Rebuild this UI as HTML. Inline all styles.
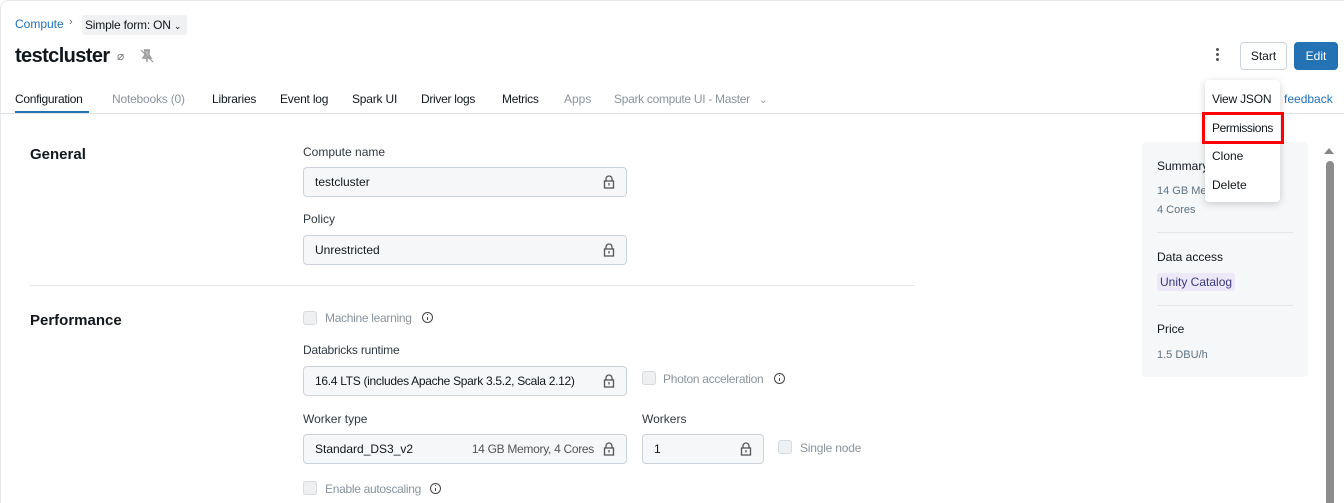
<!DOCTYPE html>
<html><head><meta charset="utf-8"><style>
*{box-sizing:border-box;margin:0;padding:0}
html,body{width:1344px;height:503px;overflow:hidden}
body{background:#fff;font-family:"Liberation Sans",sans-serif;color:#11171c;position:relative;font-size:12px}
.a{position:absolute;white-space:nowrap}
.frame{position:absolute;left:0;top:0;width:1400px;height:503px;border:1px solid #e8ebee;border-bottom:none;border-radius:8px 8px 0 0}
.tab{position:absolute;top:92px;font-size:12px;color:#11171c}
.tab.d{color:#8a949e}
.lbl{position:absolute;font-size:12px;color:#2f3941}
.inp{position:absolute;height:30px;background:#f6f7f9;border:1px solid #cbd2d9;border-radius:4px;font-size:12px;line-height:28px;padding-left:11px;color:#11171c}
.lock{position:absolute;right:11px;top:7px}
.cb{position:absolute;width:14px;height:14px;border:1px solid #d5dbe0;background:#eef0f2;border-radius:3px}
.gl{color:#8a949e;font-size:12px}
.info{display:inline-block;width:11px;height:11px;border:1.2px solid #444;border-radius:50%;position:absolute}
.info:after{content:"";position:absolute;left:3.6px;top:3.5px;width:1.2px;height:3px;background:#444}
.info:before{content:"";position:absolute;left:3.6px;top:1.3px;width:1.2px;height:1.2px;background:#444}
.h{position:absolute;font-size:15px;font-weight:bold;color:#11171c}
</style></head><body>
<div class="frame"></div>
<div class="a" style="left:15px;top:17px;font-size:12px;color:#2272b4">Compute</div>
<div class="a" style="left:69px;top:16px;font-size:11px;color:#666">›</div>
<div class="a" style="left:82px;top:15px;height:20px;width:105px;background:#f0f1f3;border-radius:3px;padding:3px 3px;font-size:12px;letter-spacing:-0.2px">Simple form: ON <span style="font-size:9px">⌄</span></div>
<div class="a" style="left:15px;top:45px;font-size:20px;font-weight:bold;letter-spacing:-0.6px">testcluster</div>
<div class="a" style="left:117px;top:49px;font-size:12px;color:#777">⌀</div>
<svg class="a" style="left:140px;top:49px" width="14" height="14" viewBox="0 0 14 14"><path d="M4 1h6M5 1v5l-2 3h8l-2-3V1M7 9v4" stroke="#999" stroke-width="1.4" fill="#bbb"/><path d="M1 1l12 12" stroke="#999" stroke-width="1.2"/></svg>
<div class="tab" style="left:15px;letter-spacing:-0.3px">Configuration</div>
<div class="a" style="left:15px;top:111px;width:74px;height:3px;background:#2272b4"></div>
<div class="tab d" style="left:112px;letter-spacing:-0.2px">Notebooks (0)</div>
<div class="tab" style="left:212px;letter-spacing:-0.2px">Libraries</div>
<div class="tab" style="left:280px;letter-spacing:-0.2px">Event log</div>
<div class="tab" style="left:352px;letter-spacing:-0.2px">Spark UI</div>
<div class="tab" style="left:421px;letter-spacing:-0.3px">Driver logs</div>
<div class="tab" style="left:502px;letter-spacing:-0.3px">Metrics</div>
<div class="tab d" style="left:564px">Apps</div>
<div class="tab d" style="left:614px;letter-spacing:-0.3px">Spark compute UI - Master &nbsp; <span style="font-size:10px">⌄</span></div>
<div class="tab" style="left:1274px;color:#2272b4">d feedback</div>
<div class="a" style="left:0;top:113px;width:1344px;height:1px;background:#dfe3e7"></div>
<div class="a" style="left:1216px;top:48px;width:3px;height:3px;background:#555;border-radius:50%;box-shadow:0 5px 0 #555,0 10px 0 #555"></div>
<div class="a" style="left:1240px;top:42px;width:47px;height:28px;border:1px solid #cbd2d9;border-radius:4px;text-align:center;line-height:26px;font-size:12px">Start</div>
<div class="a" style="left:1294px;top:42px;width:44px;height:28px;background:#2272b4;border-radius:4px;text-align:center;line-height:28px;font-size:12px;color:#fff">Edit</div>
<div class="h" style="left:30px;top:146px">General</div>
<div class="lbl" style="left:303px;top:145px">Compute name</div>
<div class="inp" style="left:303px;top:167px;width:324px">testcluster<svg class="lock" width="12" height="14" viewBox="0 0 12 14"><path d="M3 6V4a3 3 0 0 1 6 0v2" fill="none" stroke="#555" stroke-width="1.3"/><rect x="1.5" y="6" width="9" height="7" fill="none" stroke="#555" stroke-width="1.3"/><path d="M6 8v2.5" stroke="#555" stroke-width="1.3"/></svg></div>
<div class="lbl" style="left:303px;top:212px">Policy</div>
<div class="inp" style="left:303px;top:235px;width:324px">Unrestricted<svg class="lock" width="12" height="14" viewBox="0 0 12 14"><path d="M3 6V4a3 3 0 0 1 6 0v2" fill="none" stroke="#555" stroke-width="1.3"/><rect x="1.5" y="6" width="9" height="7" fill="none" stroke="#555" stroke-width="1.3"/><path d="M6 8v2.5" stroke="#555" stroke-width="1.3"/></svg></div>
<div class="a" style="left:30px;top:285px;width:885px;height:1px;background:#e4e7ea"></div>
<div class="h" style="left:30px;top:312px">Performance</div>
<div class="cb" style="left:303px;top:311px"></div>
<div class="a gl" style="left:325px;top:311px;letter-spacing:-0.3px">Machine learning</div>
<div class="info" style="left:422px;top:312px"></div>
<div class="lbl" style="left:303px;top:343px;letter-spacing:-0.2px">Databricks runtime</div>
<div class="inp" style="left:303px;top:366px;width:324px;letter-spacing:-0.3px">16.4 LTS (includes Apache Spark 3.5.2, Scala 2.12)<svg class="lock" width="12" height="14" viewBox="0 0 12 14"><path d="M3 6V4a3 3 0 0 1 6 0v2" fill="none" stroke="#555" stroke-width="1.3"/><rect x="1.5" y="6" width="9" height="7" fill="none" stroke="#555" stroke-width="1.3"/><path d="M6 8v2.5" stroke="#555" stroke-width="1.3"/></svg></div>
<div class="cb" style="left:642px;top:371px"></div>
<div class="a gl" style="left:663px;top:372px;letter-spacing:-0.3px">Photon acceleration</div>
<div class="info" style="left:774px;top:373px"></div>
<div class="lbl" style="left:303px;top:412px">Worker type</div>
<div class="inp" style="left:303px;top:434px;width:324px">Standard_DS3_v2<span style="position:absolute;right:32px;color:#555;letter-spacing:-0.3px">14 GB Memory, 4 Cores</span><svg class="lock" width="12" height="14" viewBox="0 0 12 14"><path d="M3 6V4a3 3 0 0 1 6 0v2" fill="none" stroke="#555" stroke-width="1.3"/><rect x="1.5" y="6" width="9" height="7" fill="none" stroke="#555" stroke-width="1.3"/><path d="M6 8v2.5" stroke="#555" stroke-width="1.3"/></svg></div>
<div class="lbl" style="left:642px;top:412px">Workers</div>
<div class="inp" style="left:642px;top:434px;width:122px">1<svg class="lock" width="12" height="14" viewBox="0 0 12 14"><path d="M3 6V4a3 3 0 0 1 6 0v2" fill="none" stroke="#555" stroke-width="1.3"/><rect x="1.5" y="6" width="9" height="7" fill="none" stroke="#555" stroke-width="1.3"/><path d="M6 8v2.5" stroke="#555" stroke-width="1.3"/></svg></div>
<div class="cb" style="left:778px;top:440px"></div>
<div class="a gl" style="left:800px;top:441px;letter-spacing:-0.2px">Single node</div>
<div class="cb" style="left:303px;top:481px"></div>
<div class="a gl" style="left:325px;top:482px;letter-spacing:-0.3px">Enable autoscaling</div>
<div class="info" style="left:430px;top:483px"></div>
<div class="a" style="left:1142px;top:142px;width:166px;height:235px;background:#f6f7f9;border-radius:4px"></div>
<div class="a" style="left:1157px;top:159px;font-size:12px">Summary</div>
<div class="a" style="left:1157px;top:185px;font-size:11px;color:#5f7281">14 GB Me</div>
<div class="a" style="left:1157px;top:204px;font-size:11px;color:#5f7281">4 Cores</div>
<div class="a" style="left:1157px;top:232px;width:136px;height:1px;background:#e4e7ea"></div>
<div class="a" style="left:1157px;top:250px;font-size:12px">Data access</div>
<div class="a" style="left:1157px;top:273px;height:18px;padding:2px 3px;background:#ece8f7;border-radius:3px;font-size:12px;color:#3b3b7a">Unity Catalog</div>
<div class="a" style="left:1157px;top:305px;width:136px;height:1px;background:#e4e7ea"></div>
<div class="a" style="left:1157px;top:322px;font-size:12px">Price</div>
<div class="a" style="left:1157px;top:349px;font-size:11px;color:#5f7281">1.5 DBU/h</div>
<div class="a" style="left:1324px;top:148px;width:0;height:0;border-left:5px solid transparent;border-right:5px solid transparent;border-bottom:6px solid #888"></div>
<div class="a" style="left:1326px;top:161px;width:8px;height:350px;background:#8c8c8c;border-radius:4px"></div>
<div class="a" style="left:1205px;top:80px;width:75px;height:122px;background:#fff;border-radius:4px;box-shadow:0 2px 8px rgba(0,0,0,.18)"></div>
<div class="a" style="left:1212px;top:92px;font-size:12px;letter-spacing:-0.2px">View JSON</div>
<div class="a" style="left:1202px;top:112px;width:82px;height:32px;border:3px solid #f00"></div>
<div class="a" style="left:1212px;top:121px;font-size:12px;letter-spacing:-0.4px">Permissions</div>
<div class="a" style="left:1212px;top:149px;font-size:12px">Clone</div>
<div class="a" style="left:1212px;top:178px;font-size:12px">Delete</div>
</body></html>
